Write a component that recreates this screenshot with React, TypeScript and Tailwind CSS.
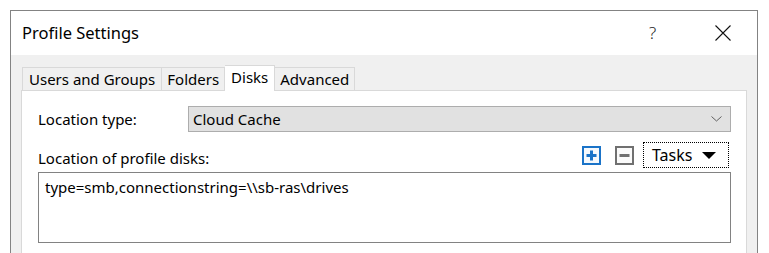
import React from "react";

const font = { fontFamily: '"Noto Sans", "Open Sans", sans-serif' };

function PlusIcon() {
  return (
    <svg width="19" height="19" viewBox="0 0 19 19">
      <rect x="1" y="1" width="17" height="17" fill="#f5f9fd" stroke="#1a73c8" strokeWidth="2" />
      <rect x="8" y="4.5" width="3" height="10" fill="#1a73c8" />
      <rect x="4.5" y="8" width="10" height="3" fill="#1a73c8" />
    </svg>
  );
}

function MinusIcon() {
  return (
    <svg width="19" height="19" viewBox="0 0 19 19">
      <rect x="1" y="1" width="17" height="17" fill="#fafafa" stroke="#707070" strokeWidth="2" />
      <rect x="4.5" y="8" width="10" height="3" fill="#707070" />
    </svg>
  );
}

export default function App() {
  return (
    <div className="w-[769px] h-[253px] bg-white overflow-hidden pt-[10px] pl-[10px]" style={font}>
      <div className="w-[748px] border border-[#838383] bg-[#f0f0f0] flex flex-col">
        <div className="shrink-0 h-[44px] bg-white flex items-center pl-[11px] text-[16.5px] text-black">
          <span className="flex-1">Profile Settings</span>
          <span className="text-[17px] font-light w-[10px] mr-[56px] text-[#222]">?</span>
          <svg width="16" height="16" viewBox="0 0 16 16" className="mr-[26px]">
            <path d="M0.5 0.5 L15.5 15.5 M15.5 0.5 L0.5 15.5" stroke="#111" strokeWidth="1.1" />
          </svg>
        </div>
        <div className="pt-[10px] px-[10px] flex flex-col text-[15px] text-black">
          <div className="flex items-end pl-[1px] h-[26px] -mb-[1px] relative z-10">
            <div className="h-[24px] px-[6px] flex items-center border border-[#d9d9d9] bg-[#f0f0f0]">Users and Groups</div>
            <div className="h-[24px] px-[5px] flex items-center border border-l-0 border-[#d9d9d9] bg-[#f0f0f0]">Folders</div>
            <div className="h-[26px] px-[6px] pb-[3px] flex items-center border border-b-0 border-l-0 border-[#d9d9d9] bg-white">Disks</div>
            <div className="h-[24px] px-[5px] flex items-center border border-l-0 border-[#d9d9d9] bg-[#f0f0f0]">Advanced</div>
          </div>
          <div className="h-[200px] border border-[#d9d9d9] bg-white pl-[16px] pr-[15px] pt-[15px]">
            <div className="flex items-center">
              <span className="w-[150px]">Location type:</span>
              <div className="flex-1 h-[26px] bg-[#e1e1e1] border border-[#adadad] flex items-center pl-[4px] pr-[8px]">
                <span className="flex-1">Cloud Cache</span>
                <svg width="11" height="6" viewBox="0 0 11 6">
                  <path d="M0.5 0.5 L5.5 5 L10.5 0.5" stroke="#606060" strokeWidth="1" fill="none" />
                </svg>
              </div>
            </div>
            <div className="flex items-end mt-[10px] h-[26px]">
              <span className="flex-1 leading-[20px]">Location of profile disks:</span>
              <div className="flex items-center gap-[14px] self-center">
                <PlusIcon />
                <MinusIcon />
              </div>
              <div className="ml-[9px] mr-[2px] w-[86px] h-[26px] border border-dotted border-black flex items-center pl-[8px] pr-[12px]">
                <span className="flex-1 text-[16px]">Tasks</span>
                <svg width="14" height="7" viewBox="0 0 14 7">
                  <path d="M0 0 L14 0 L7 7 Z" fill="#000" />
                </svg>
              </div>
            </div>
            <div className="mt-[4px] h-[71px] border border-[#828282] px-[6px] pt-[3px]">
              type=smb,connectionstring=\\sb-ras\drives
            </div>
          </div>
        </div>
      </div>
    </div>
  );
}
